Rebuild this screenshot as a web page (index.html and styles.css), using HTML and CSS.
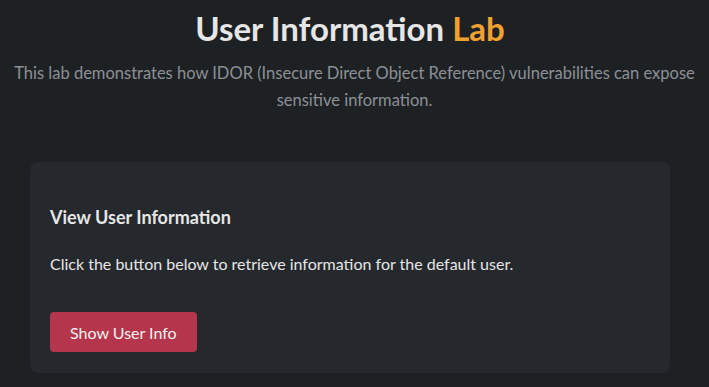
FILE: index.html
```html
<!DOCTYPE html>
<html lang="en">
<head>
  <meta charset="UTF-8" />
  <meta name="viewport" content="width=device-width, initial-scale=1" />
  <title>User Information Lab</title>
  <link rel="stylesheet" href="styles.css">
</head>
<body>
  <main class="lab">
    <header class="lab-header">
      <h1 class="lab-title">User Information <span class="accent">Lab</span></h1>
      <p class="lab-intro">This lab demonstrates how IDOR (Insecure Direct Object Reference) vulnerabilities can expose sensitive information.</p>
    </header>

    <section class="card">
      <h2 class="card-title">View User Information</h2>
      <p class="card-text">Click the button below to retrieve information for the default user.</p>
      <button class="btn-show" id="showInfo">Show User Info</button>
    </section>
  </main>
</body>
</html>
```

FILE: styles.css
```css
:root {
  --bg: #1e2124;
  --card-bg: #25282d;
  --text: #e6e6e6;
  --muted: #8c9096;
  --accent: #f0a030;
  --danger: #b5364c;
  --font-family: Lato, 'Open Sans', sans-serif;
}

body {
  margin: 0;
  background: var(--bg);
  color: var(--text);
  font-family: var(--font-family);
}

.lab {
  padding: 0 39px 0 30px;
}

.lab-header {
  text-align: center;
  padding-top: 8px;
}

.lab-title {
  margin: 0;
  font-size: 33px;
  font-weight: 700;
  line-height: 40px;
}

.accent {
  color: var(--accent);
}

.lab-intro {
  margin: 12px -39px 0 -30px;
  padding: 0 8px;
  font-size: 16.5px;
  line-height: 27px;
  color: var(--muted);
}

.card {
  margin-top: 48px;
  background: var(--card-bg);
  border-radius: 8px;
  padding: 20px 20px 21px;
}

.card-title {
  margin: 22px 0 0;
  font-size: 18px;
  font-weight: 700;
  line-height: 26px;
}

.card-text {
  margin: 22px 0 0;
  font-size: 16px;
  line-height: 24px;
}

.btn-show {
  margin-top: 36px;
  background: var(--danger);
  color: #f2f2f2;
  border: none;
  border-radius: 4px;
  height: 40px;
  padding: 0 20px;
  font-family: var(--font-family);
  font-size: 16px;
  cursor: pointer;
}
```
